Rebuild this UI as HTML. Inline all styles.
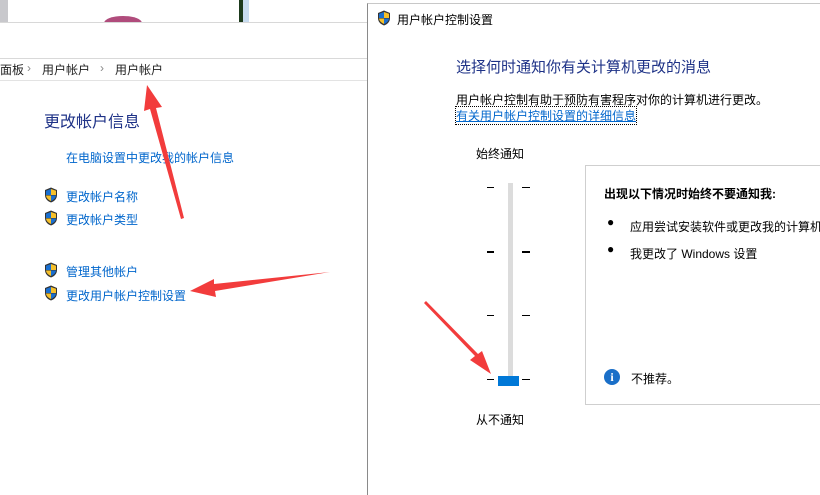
<!DOCTYPE html>
<html><head><meta charset="utf-8"><style>
*{margin:0;padding:0;box-sizing:border-box}
body{width:820px;height:491px;overflow:hidden;background:#fff;position:relative;font-family:"Liberation Sans","Noto Sans CJK SC",sans-serif;font-size:12px;color:#000}
.a{position:absolute;white-space:nowrap}
.blue{color:#0066cc}
.h{color:#1e3287}
</style></head><body>
<div class="a" style="left:0;top:0;width:8px;height:22px;background:#c8c8cc"></div>
<div class="a" style="left:104px;top:16px;width:38px;height:14px;border-radius:50%;background:#b04c7c"></div>
<div class="a" style="left:0;top:22px;width:367px;height:470px;background:#fff;border-top:1px solid #d8d8d8"></div>
<div class="a" style="left:239px;top:0;width:4px;height:22px;background:#1d3a1d"></div>
<div class="a" style="left:243px;top:0;width:6px;height:22px;background:#c8dcf0"></div>
<div class="a" style="left:0;top:58px;width:367px;height:1px;background:#d9d9d9"></div>
<div class="a" style="left:0;top:80px;width:367px;height:1px;background:#e3e3e3"></div>
<div class="a" style="left:0;top:61px;font-size:12px;color:#222">面板</div>
<div class="a" style="left:27px;top:61px;color:#888">›</div>
<div class="a" style="left:42px;top:61px;color:#222">用户帐户</div>
<div class="a" style="left:100px;top:61px;color:#888">›</div>
<div class="a" style="left:115px;top:61px;color:#222">用户帐户</div>
<div class="a h" style="left:44px;top:108px;font-size:16px">更改帐户信息</div>
<div class="a blue" style="left:66px;top:149px">在电脑设置中更改我的帐户信息</div>
<svg width="0" height="0" style="position:absolute"><defs><g id="sh"><path d="M7 0.5 L13 3 V8 C13 12 10 14.5 7 15.5 C4 14.5 1 12 1 8 V3 Z" fill="#333"/><path d="M7 2 V8 H2 V3.8 Z" fill="#1a6fd0"/><path d="M7 2 L12 3.8 V8 H7Z" fill="#f6c02a"/><path d="M2 8.5 H7 V14 C4.5 13 2.2 11 2 8.5Z" fill="#f6c02a"/><path d="M7 8.5 H12 C11.8 11 9.5 13 7 14Z" fill="#1a6fd0"/></g></defs></svg>
<svg class="a" style="left:44px;top:187px" width="14" height="16"><use href="#sh"/></svg>
<div class="a blue" style="left:66px;top:188px">更改帐户名称</div>
<svg class="a" style="left:44px;top:210px" width="14" height="16"><use href="#sh"/></svg>
<div class="a blue" style="left:66px;top:211px">更改帐户类型</div>
<svg class="a" style="left:44px;top:262px" width="14" height="16"><use href="#sh"/></svg>
<div class="a blue" style="left:66px;top:263px">管理其他帐户</div>
<svg class="a" style="left:44px;top:285px" width="14" height="16"><use href="#sh"/></svg>
<div class="a blue" style="left:66px;top:287px">更改用户帐户控制设置</div>
<div class="a" style="left:367px;top:3px;width:460px;height:492px;background:#fff;border-left:1px solid #8a8a8a;border-top:1px solid #c8c8c8"></div>
<svg class="a" style="left:377px;top:10px" width="14" height="16"><use href="#sh"/></svg>
<div class="a" style="left:397px;top:11px;font-size:12px">用户帐户控制设置</div>
<div class="a h" style="left:456px;top:56px;font-size:15px">选择何时通知你有关计算机更改的消息</div>
<div class="a" style="left:456px;top:91px">用户帐户控制有助于预防有害程序对你的计算机进行更改。</div>
<div class="a blue" style="left:456px;top:107px;text-decoration:underline;outline:1px dotted #000">有关用户帐户控制设置的详细信息</div>
<div class="a" style="left:476px;top:145px">始终通知</div>
<div class="a" style="left:476px;top:411px">从不通知</div>
<div class="a" style="left:508px;top:183px;width:5px;height:202px;background:#dcdcdc"></div>
<div class="a" style="left:487px;top:187px;width:7px;height:1px;background:#000"></div>
<div class="a" style="left:522px;top:187px;width:8px;height:1px;background:#000"></div>
<div class="a" style="left:487px;top:251px;width:7px;height:2px;background:#000"></div>
<div class="a" style="left:522px;top:251px;width:8px;height:2px;background:#000"></div>
<div class="a" style="left:487px;top:315px;width:7px;height:1px;background:#000"></div>
<div class="a" style="left:522px;top:315px;width:8px;height:1px;background:#000"></div>
<div class="a" style="left:487px;top:379px;width:7px;height:1px;background:#000"></div>
<div class="a" style="left:522px;top:379px;width:8px;height:1px;background:#000"></div>
<div class="a" style="left:498px;top:376px;width:21px;height:10px;background:#0078d7"></div>
<div class="a" style="left:585px;top:165px;width:240px;height:240px;border:1px solid #cfcfcf;border-right:none"></div>
<div class="a" style="left:604px;top:185px;font-weight:bold">出现以下情况时始终不要通知我:</div>
<div class="a" style="left:607px;top:215px">●</div>
<div class="a" style="left:630px;top:218px">应用尝试安装软件或更改我的计算机</div>
<div class="a" style="left:607px;top:242px">●</div>
<div class="a" style="left:630px;top:245px">我更改了 Windows 设置</div>
<div class="a" style="left:604px;top:369px;width:16px;height:16px;border-radius:50%;background:#1a6fc8;color:#fff;font-weight:bold;font-size:12px;text-align:center;line-height:16px;font-family:'Liberation Serif',serif">i</div>
<div class="a" style="left:631px;top:370px">不推荐。</div>
<svg class="a" style="left:0;top:0" width="820" height="491">
<g fill="#f23c3c">
<path d="M184 218 L156 108 L162 107 L147 85 L144 111 L150 109 L181 219Z"/>
<path d="M330 272 L214 284 L214 279 L190 291 L216 297 L215 291Z"/>
<path d="M424 303 L475 356 L470 360 L491 374 L482 351 L478 354 L426 301Z"/>
</g></svg>
</body></html>
